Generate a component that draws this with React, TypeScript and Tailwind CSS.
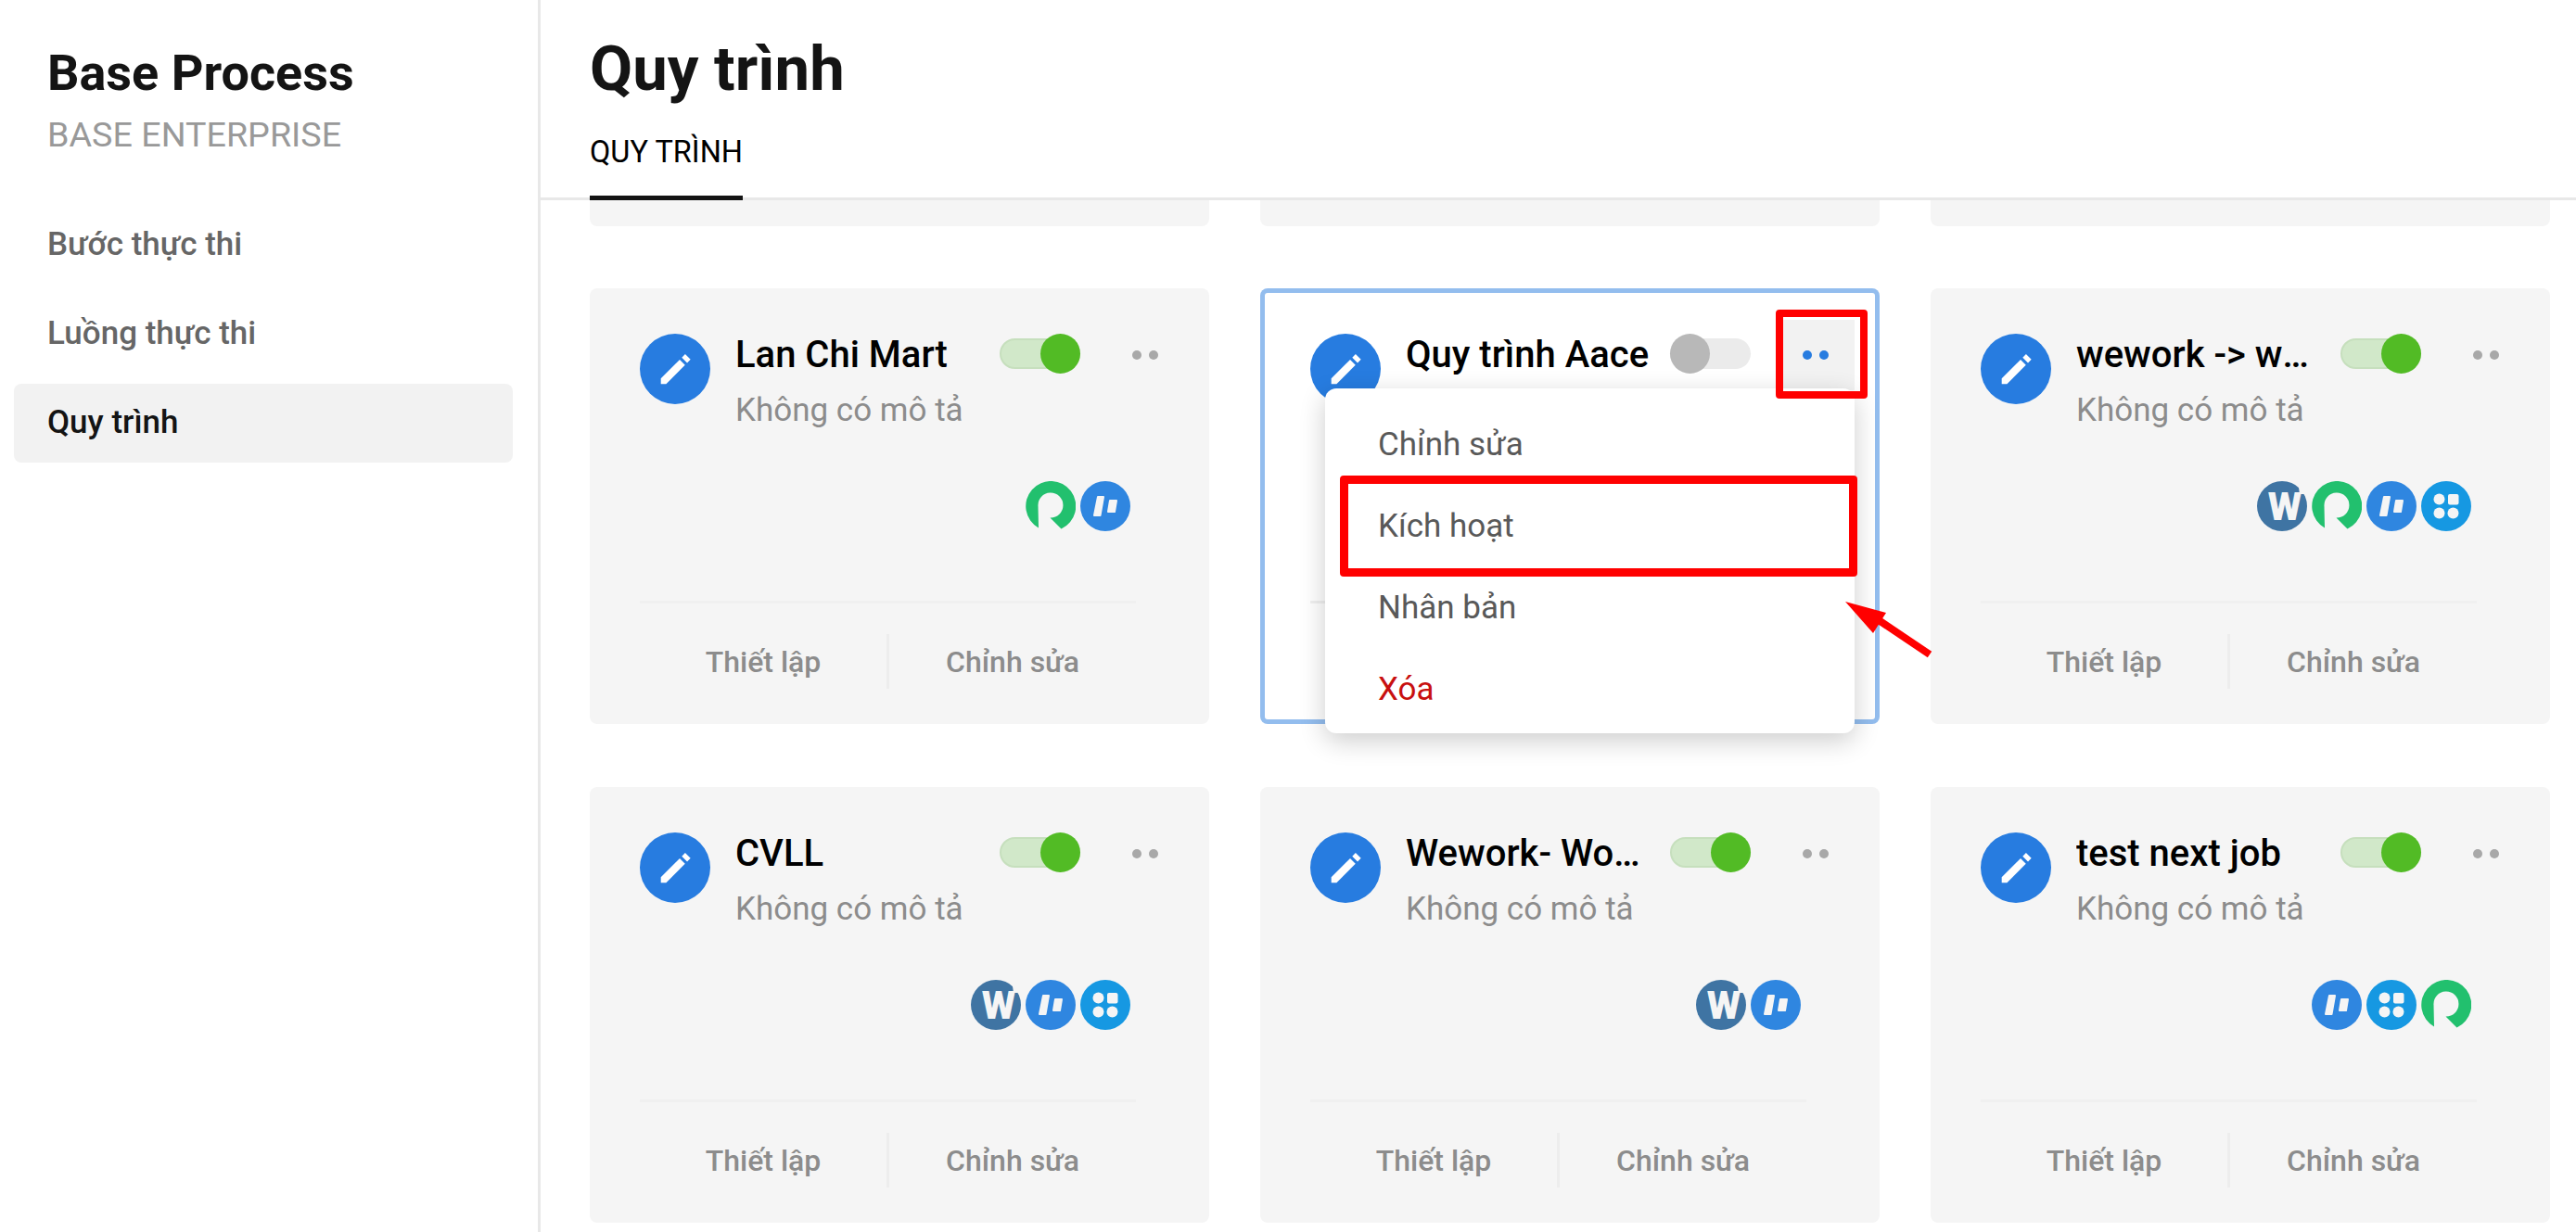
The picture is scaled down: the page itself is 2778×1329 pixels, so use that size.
// Base Process: workflow cards with the row menu open on the second card

type Logo = 'w' | 'r' | 't' | 'g'

interface Flow {
  name: string
  logos: Logo[]
  active: boolean
  open?: boolean
}

const FLOWS: Flow[] = [
  { name: 'Lan Chi Mart', logos: ['r', 't'], active: true },
  { name: 'Quy trình Aace', logos: [], active: false, open: true },
  { name: 'wework -> work', logos: ['w', 'r', 't', 'g'], active: true },
  { name: 'CVLL', logos: ['w', 't', 'g'], active: true },
  { name: 'Wework- Woocommerce', logos: ['w', 't'], active: true },
  { name: 'test next job', logos: ['t', 'g', 'r'], active: true },
]

function AppLogo({ kind }: { kind: Logo }) {
  if (kind === 'r') {
    return (
      <svg width="54" height="54" viewBox="0 0 54 54">
        <path d="M14 50.5 A27 27 0 1 1 38.5 51.5 L26.5 39.5 A13.5 13.5 0 1 0 13.5 27 Z" fill="#22c06e" />
      </svg>
    )
  }
  if (kind === 't') {
    return (
      <svg width="54" height="54" viewBox="0 0 54 54">
        <circle cx="27" cy="27" r="27" fill="#2f86e0" />
        <path d="M19 17 L25 17 L21.5 37 L15 37 Z" fill="#f5f5f5" stroke="#f5f5f5" strokeWidth="2" strokeLinejoin="round" />
        <path d="M32 21 L39 21 L37 33 L30 33 Z" fill="#f5f5f5" stroke="#f5f5f5" strokeWidth="2" strokeLinejoin="round" />
      </svg>
    )
  }
  if (kind === 'g') {
    return (
      <svg width="54" height="54" viewBox="0 0 54 54">
        <circle cx="27" cy="27" r="27" fill="#1698e2" />
        <circle cx="19.5" cy="19.5" r="6" fill="#f5f5f5" />
        <circle cx="19.5" cy="34.5" r="6" fill="#f5f5f5" />
        <circle cx="34.5" cy="34.5" r="6" fill="#f5f5f5" />
        <rect x="29" y="14" width="11.5" height="11.5" rx="2" fill="#f5f5f5" />
      </svg>
    )
  }
  return (
    <svg width="54" height="54" viewBox="0 0 54 54">
      <circle cx="27" cy="27" r="27" fill="#3f74a3" />
      <path d="M44 0 L54 0 L54 14 L46 14 Z" fill="#f5f5f5" />
      <text x="30" y="42" textAnchor="middle" fontSize="42" fontWeight="900" fill="#f5f5f5" fontFamily="Roboto, sans-serif">
        W
      </text>
    </svg>
  )
}

function PencilBadge() {
  return (
    <div className="flex h-[76px] w-[76px] shrink-0 items-center justify-center rounded-full bg-[#277ce0]">
      <svg width="46" height="46" viewBox="0 0 24 24" fill="#ffffff">
        <path d="M4 20.5V17.4L14.6 6.8l3 3L7 20.5H4z" />
        <path d="M15.8 5.6l1.9-1.9 3 3-1.9 1.9-3-3z" />
      </svg>
    </div>
  )
}

function Toggle({ on }: { on: boolean }) {
  return (
    <div className="relative h-[43px] w-[87px] shrink-0">
      <div className={`absolute inset-x-0 top-[5px] h-[33px] rounded-full ${on ? 'bg-[#d1e8c9] border-2 border-[#c6dfbd]' : 'bg-[#ebebeb]'}`} />
      <div className={`absolute top-0 h-[43px] w-[43px] rounded-full ${on ? 'right-0 bg-[#52bb25]' : 'left-0 bg-[#b8b8b8]'}`} />
    </div>
  )
}

function MoreDots({ open }: { open?: boolean }) {
  return (
    <div className={`-mt-[15px] ml-[28px] flex h-[76px] w-[84px] shrink-0 items-center justify-center gap-[8px] ${open ? 'bg-[#f2f2f2]' : ''}`}>
      <span className={`h-[10px] w-[10px] rounded-full ${open ? 'bg-[#277ce0]' : 'bg-[#a8a8a8]'}`} />
      <span className={`h-[10px] w-[10px] rounded-full ${open ? 'bg-[#277ce0]' : 'bg-[#a8a8a8]'}`} />
    </div>
  )
}

function RowMenu() {
  return (
    <div className="absolute left-[70px] top-[108px] z-10 w-[571px] rounded-xl bg-white pb-[3px] pt-[17px] text-[35px] leading-[88px] text-[#595959] shadow-[0_8px_28px_rgba(0,0,0,0.2)]">
      <div className="px-[57px]">Chỉnh sửa</div>
      <div className="px-[57px]">Kích hoạt</div>
      <div className="px-[57px]">Nhân bản</div>
      <div className="px-[57px] text-[#c81010]">Xóa</div>
    </div>
  )
}

function FlowCard({ flow }: { flow: Flow }) {
  return (
    <div className={`relative h-[470px] rounded-lg pl-[54px] pt-[49px] ${flow.open ? 'bg-white ring-[5px] ring-inset ring-[#93bdee]' : 'bg-[#f5f5f5]'}`}>
      <div className="flex items-start">
        <PencilBadge />
        <div className="ml-[27px] w-[285px] shrink-0">
          <div className="truncate pr-[18px] pt-[1px] text-[40px] font-medium leading-[44px] text-black">{flow.name}</div>
          <div className="mt-[16px] text-[35px] leading-[44px] text-[#8c8c8c]">Không có mô tả</div>
        </div>
        <Toggle on={flow.active} />
        <MoreDots open={flow.open} />
      </div>

      <div className="mr-[85px] mt-[54px] flex h-[54px] justify-end gap-[5px]">
        {flow.logos.map((l) => (
          <AppLogo key={l} kind={l} />
        ))}
      </div>

      <div className="mr-[79px] mt-[75px] border-t-[3px] border-[#f0f0f0]" />

      <div className="mr-[79px] mt-[33px] flex h-[59px] items-center text-[32px] font-medium text-[#8c8c8c]">
        <div className="flex-1 text-center">Thiết lập</div>
        <div className="h-full w-[3px] bg-[#ededed]" />
        <div className="flex-1 text-center">Chỉnh sửa</div>
      </div>

      {flow.open && (
        <>
          <RowMenu />
          {/* Red annotations from the help article */}
          <div className="absolute left-[556px] top-[23px] z-20 h-[96px] w-[99px] rounded-sm border-[8px] border-[#ff0000]" />
          <div className="absolute left-[86px] top-[202px] z-20 h-[109px] w-[558px] rounded-sm border-[9px] border-[#ff0000]" />
          <svg className="absolute left-[626px] top-[334px] z-20" width="100" height="66" viewBox="0 0 100 66">
            <path d="M5 4 L49 16 L35 38 Z" fill="#ff0000" />
            <path d="M38 22 L96 61" stroke="#ff0000" strokeWidth="8" />
          </svg>
        </>
      )}
    </div>
  )
}

export default function App() {
  return (
    <div className="flex h-[1329px] overflow-hidden bg-white font-['Roboto',sans-serif]">
      <aside className="w-[583px] shrink-0 border-r-[3px] border-[#e8e8e8] pl-[15px] pr-[27px]">
        <div className="pl-[36px] pt-[48px]">
          <div className="text-[54px] font-bold leading-[62px] text-[#141414]">Base Process</div>
          <div className="mt-[10px] text-[37.7px] leading-[50px] text-[#999999]">BASE ENTERPRISE</div>
        </div>
        <nav className="mt-[52px] text-[35px] font-medium text-[#666666]">
          <div className="flex h-[85px] items-center pl-[36px]">Bước thực thi</div>
          <div className="mt-[11px] flex h-[85px] items-center pl-[36px]">Luồng thực thi</div>
          <div className="mt-[11px] flex h-[85px] items-center rounded-lg bg-[#f2f2f2] pl-[36px] text-[#141414]">Quy trình</div>
        </nav>
      </aside>

      <main className="min-w-0 flex-1">
        <header className="h-[216px] border-b-[3px] border-[#e8e8e8] pl-[53px]">
          <h1 className="pt-[31px] text-[67px] font-bold leading-[86px] text-[#141414]">Quy trình</h1>
          <div className="mt-[16px] inline-block h-[83px] border-b-[5px] border-[#141414] pt-[9px] text-[32.5px] leading-[44px] text-black">QUY TRÌNH</div>
        </header>

        <div className="pl-[53px] pr-[28px]">
          <div className="grid grid-cols-3 gap-x-[55px]">
            <div className="h-[28px] rounded-b-lg bg-[#f5f5f5]" />
            <div className="h-[28px] rounded-b-lg bg-[#f5f5f5]" />
            <div className="h-[28px] rounded-b-lg bg-[#f5f5f5]" />
          </div>
          <div className="mt-[67px] grid grid-cols-3 gap-x-[55px] gap-y-[68px]">
            {FLOWS.map((f) => (
              <FlowCard key={f.name} flow={f} />
            ))}
          </div>
        </div>
      </main>
    </div>
  )
}
